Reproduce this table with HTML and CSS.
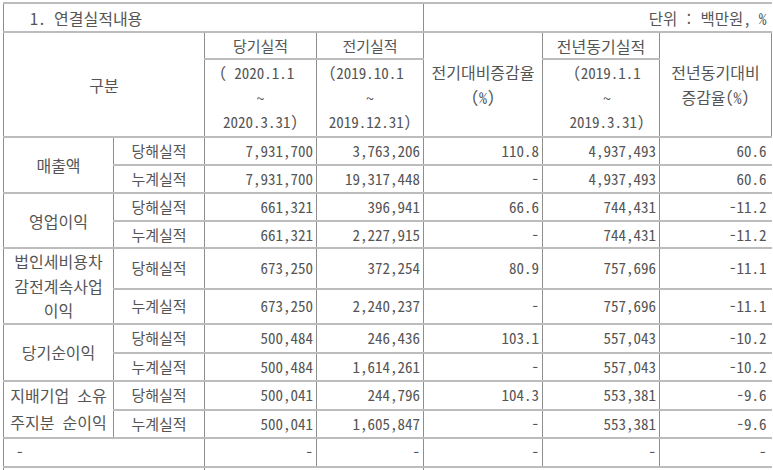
FILE: index.html
```html
<!DOCTYPE html>
<html lang="ko">
<head>
<meta charset="utf-8">
<title>연결실적내용</title>
<link rel="stylesheet" href="styles.css">
</head>
<body>
<table class="report">
  <colgroup>
    <col class="c-a"><col class="c-b"><col class="c-c"><col class="c-d"><col class="c-e"><col class="c-f"><col class="c-g">
  </colgroup>
  <tr class="r-title">
    <td colspan="4" class="title big">1. 연결실적내용</td>
    <td colspan="3" class="unit">단위 : 백만원, %</td>
  </tr>
  <tr class="r-h1">
    <td colspan="2" rowspan="2" class="big">구분</td>
    <td>당기실적</td>
    <td>전기실적</td>
    <td rowspan="2" class="ml big">전기대비증감율<br>(%)</td>
    <td class="big">전년동기실적</td>
    <td rowspan="2" class="ml big">전년동기대비<br>증감율(%)</td>
  </tr>
  <tr class="r-h2">
    <td class="ml">( 2020.1.1&nbsp;<br>~<br>2020.3.31)</td>
    <td class="ml">(2019.10.1&nbsp;<br>~<br>2019.12.31)</td>
    <td class="ml shift">(2019.1.1<br>~<br>2019.3.31)</td>
  </tr>

  <tr class="r-28">
    <td rowspan="2" class="big">매출액</td>
    <td>당해실적</td>
    <td class="num">7,931,700</td><td class="num">3,763,206</td><td class="num">110.8</td><td class="num">4,937,493</td><td class="num last">60.6</td>
  </tr>
  <tr class="r-28">
    <td>누계실적</td>
    <td class="num">7,931,700</td><td class="num">19,317,448</td><td class="num">-</td><td class="num">4,937,493</td><td class="num last">60.6</td>
  </tr>

  <tr class="r-28">
    <td rowspan="2" class="big">영업이익</td>
    <td>당해실적</td>
    <td class="num">661,321</td><td class="num">396,941</td><td class="num">66.6</td><td class="num">744,431</td><td class="num last">-11.2</td>
  </tr>
  <tr class="r-27">
    <td>누계실적</td>
    <td class="num">661,321</td><td class="num">2,227,915</td><td class="num">-</td><td class="num">744,431</td><td class="num last">-11.2</td>
  </tr>

  <tr class="r-40">
    <td rowspan="2" class="ml big">법인세비용차<br>감전계속사업<br>이익</td>
    <td>당해실적</td>
    <td class="num">673,250</td><td class="num">372,254</td><td class="num">80.9</td><td class="num">757,696</td><td class="num last">-11.1</td>
  </tr>
  <tr class="r-34">
    <td>누계실적</td>
    <td class="num">673,250</td><td class="num">2,240,237</td><td class="num">-</td><td class="num">757,696</td><td class="num last">-11.1</td>
  </tr>

  <tr class="r-29">
    <td rowspan="2" class="big">당기순이익</td>
    <td>당해실적</td>
    <td class="num">500,484</td><td class="num">246,436</td><td class="num">103.1</td><td class="num">557,043</td><td class="num last">-10.2</td>
  </tr>
  <tr class="r-28">
    <td>누계실적</td>
    <td class="num">500,484</td><td class="num">1,614,261</td><td class="num">-</td><td class="num">557,043</td><td class="num last">-10.2</td>
  </tr>

  <tr class="r-29">
    <td rowspan="2" class="ml2 big">지배기업 소유<br>주지분 순이익</td>
    <td>당해실적</td>
    <td class="num">500,041</td><td class="num">244,796</td><td class="num">104.3</td><td class="num">553,381</td><td class="num last">-9.6</td>
  </tr>
  <tr class="r-28">
    <td>누계실적</td>
    <td class="num">500,041</td><td class="num">1,605,847</td><td class="num">-</td><td class="num">553,381</td><td class="num last">-9.6</td>
  </tr>

  <tr class="r-29">
    <td colspan="2" class="dash-label">-</td>
    <td class="num">-</td><td class="num">-</td><td class="num">-</td><td class="num">-</td><td class="num last">-</td>
  </tr>

  <tr class="r-next">
    <td colspan="2"></td>
    <td colspan="2"></td>
    <td colspan="3" class="last"></td>
  </tr>
</table>
</body>
</html>
```

FILE: styles.css
```css
html, body {
  margin: 0;
  padding: 0;
  background: #ffffff;
  overflow: hidden;
}

body {
  font-family: "Noto Sans Mono CJK KR", "Noto Sans CJK KR", monospace;
  font-size: 15px;
  color: #555555;
}

.report {
  border-collapse: collapse;
  table-layout: fixed;
  width: 768px;
  margin: 2px 0 0 3px;
}

.c-a { width: 110px; }
.c-b { width: 91px; }
.c-c { width: 112px; }
.c-d { width: 107px; }
.c-e { width: 119px; }
.c-f { width: 117px; }
.c-g { width: 112px; }

.report td {
  border-left: 1px solid #8e8e8e;
  border-right: 1px solid #8e8e8e;
  border-top: 2px solid #bcbcbc;
  border-bottom: 2px solid #bcbcbc;
  padding: 0 4px;
  text-align: center;
  vertical-align: middle;
  white-space: nowrap;
  line-height: 22px;
}

.report td.big {
  font-size: 16px;
}

.report td.last {
  border-right: none;
}

.report td.ml {
  line-height: 24.5px;
}

.report td.ml2 {
  line-height: 27px;
}

.report td.shift {
  padding-left: 16px;
}

.report td.num {
  text-align: right;
  padding-right: 3px;
}

.report td.num.last {
  padding-right: 5px;
}

.report td.title {
  text-align: left;
  padding-left: 26px;
}

.report td.unit {
  text-align: right;
  padding-right: 5px;
  border-right: none;
  font-size: 15.5px;
}

.report td.dash-label {
  text-align: left;
  padding-left: 12px;
}

.r-title { height: 29px; }
.r-h1 { height: 27px; }
.r-h2 { height: 78px; }
.r-27 { height: 27px; }
.r-28 { height: 28px; }
.r-29 { height: 29px; }
.r-34 { height: 34px; }
.r-40 { height: 40px; }
.r-next { height: 30px; }
```
